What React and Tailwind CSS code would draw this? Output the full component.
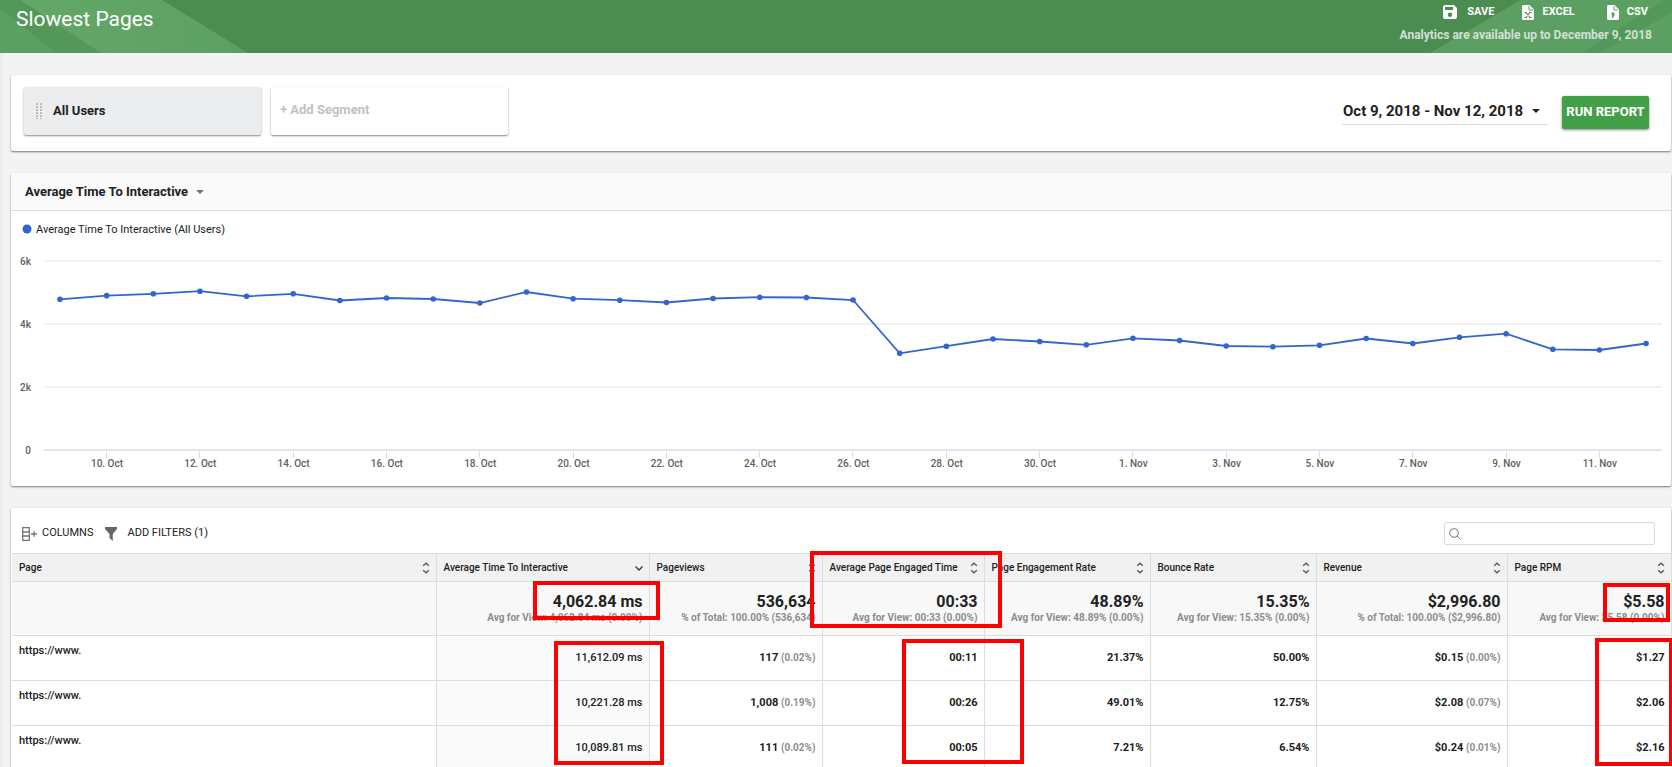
import React, { useState, useCallback } from 'react'
import clsx from 'clsx'

const times = [
  4785, 4900, 4960, 5042, 4880, 4960, 4747, 4826, 4794, 4667, 5017, 4804, 4756, 4683, 4810, 4851,
  4842, 4762, 3070, 3295, 3524, 3445, 3340, 3546, 3477, 3302, 3280, 3324, 3540, 3381, 3578, 3692,
  3197, 3175, 3381,
]

const days = [
  '10. Oct',
  '12. Oct',
  '14. Oct',
  '16. Oct',
  '18. Oct',
  '20. Oct',
  '22. Oct',
  '24. Oct',
  '26. Oct',
  '28. Oct',
  '30. Oct',
  '1. Nov',
  '3. Nov',
  '5. Nov',
  '7. Nov',
  '9. Nov',
  '11. Nov',
]

const columns = [
  { name: 'Page', width: 'w-[424px]' },
  {
    name: 'Average Time To Interactive',
    width: 'w-[213px]',
    sorted: true,
    total: '4,062.84 ms',
    note: 'Avg for View: 4,062.84 ms (0.00%)',
  },
  {
    name: 'Pageviews',
    width: 'w-[173px]',
    total: '536,634',
    note: '% of Total: 100.00% (536,634)',
  },
  {
    name: 'Average Page Engaged Time',
    width: 'w-[162px]',
    total: '00:33',
    note: 'Avg for View: 00:33 (0.00%)',
  },
  {
    name: 'Page Engagement Rate',
    width: 'w-[166px]',
    total: '48.89%',
    note: 'Avg for View: 48.89% (0.00%)',
  },
  {
    name: 'Bounce Rate',
    width: 'w-[166px]',
    total: '15.35%',
    note: 'Avg for View: 15.35% (0.00%)',
  },
  {
    name: 'Revenue',
    width: 'w-[191px]',
    total: '$2,996.80',
    note: '% of Total: 100.00% ($2,996.80)',
  },
  {
    name: 'Page RPM',
    width: 'w-[164px]',
    total: '$5.58',
    note: 'Avg for View: $5.58 (0.00%)',
  },
]

const rows = [
  [['11,612.09 ms'], ['117', '(0.02%)'], ['00:11'], ['21.37%'], ['50.00%'], ['$0.15', '(0.00%)'], ['$1.27']],
  [['10,221.28 ms'], ['1,008', '(0.19%)'], ['00:26'], ['49.01%'], ['12.75%'], ['$2.08', '(0.07%)'], ['$2.06']],
  [['10,089.81 ms'], ['111', '(0.02%)'], ['00:05'], ['7.21%'], ['6.54%'], ['$0.24', '(0.01%)'], ['$2.16']],
]

function SaveIcon() {
  return (
    <svg className="h-[14px] w-[14px]" viewBox="0 0 14 14" fill="currentColor">
      <path
        fillRule="evenodd"
        d="M2 0h9l3 3v9a2 2 0 0 1-2 2H2a2 2 0 0 1-2-2V2a2 2 0 0 1 2-2zM2 2v3h8V2zM7 7.500a2.200 2.200 0 1 0 0 4.400 2.200 2.200 0 0 0 0-4.400z"
      />
    </svg>
  )
}

function ExcelIcon() {
  return (
    <svg className="h-[15px] w-3" viewBox="0 0 12 15">
      <path fill="currentColor" d="M1.500 0H7.500L12 4.500v9a1.500 1.500 0 0 1-1.500 1.500h-9A1.500 1.500 0 0 1 0 13.500v-12A1.500 1.500 0 0 1 1.500 0z" />
      <path d="M7 1v4h4" fill="none" stroke="#5c9f62" />
      <path
        d="M2.500 7.500h2.500M7 7.500h2.500M2.500 12.500h2.500M7 12.500h2.500M4 7.500l4 5M8 7.500l-4 5"
        fill="none"
        stroke="#4f9255"
        strokeWidth="1.200"
      />
    </svg>
  )
}

function CsvIcon() {
  return (
    <svg className="h-[15px] w-3" viewBox="0 0 12 15">
      <path fill="currentColor" d="M1.500 0H7.500L12 4.500v9a1.500 1.500 0 0 1-1.500 1.500h-9A1.500 1.500 0 0 1 0 13.500v-12A1.500 1.500 0 0 1 1.500 0z" />
      <path d="M7 1v4h4" fill="none" stroke="#5c9f62" />
      <path d="M4.500 7.500h3V10.500L6 13H4.500L5.500 10.500h-1z" fill="#5c9f62" />
    </svg>
  )
}

function Caret({ className }) {
  return (
    <svg className={clsx('h-1 w-2', className)} viewBox="0 0 8 4" fill="currentColor">
      <path d="M0 0h8L4 4z" />
    </svg>
  )
}

function SortIcon({ sorted }) {
  return (
    <svg className="h-3 w-2 shrink-0" viewBox="0 0 8 12" fill="none" stroke="#555" strokeWidth="1.300">
      {sorted ? <path stroke="#333" d="M.5 4.500 4 8l3.500-3.500" /> : <path d="M1.200 3.700 4 1.200l2.800 2.500M1.200 8.300 4 10.800l2.800-2.500" />}
    </svg>
  )
}

function Card({ children, className }) {
  return (
    <section className={clsx('rounded-xs bg-white shadow-[0_1px_2px_#777]', className)}>
      {children}
    </section>
  )
}

function Header() {
  return (
    <header className="relative flex h-[53px] justify-between bg-[#4b8d50] pl-4 pr-5 text-white">
      <svg className="absolute left-0 top-0 h-[53px] w-[250px]" viewBox="0 0 250 53">
        <defs>
          <linearGradient id="ray" x1="0" y1="0" x2="1" y2="0">
            <stop offset="0" stopColor="#64a869" />
            <stop offset="1" stopColor="#5c9f62" />
          </linearGradient>
        </defs>
        <path d="M0 0h20l81 53H0z" fill="#549859" />
        <path d="M0 8l56 45H0z" fill="#5c9f62" />
        <path d="M20 0h142l86 53H101z" fill="url(#ray)" />
      </svg>
      <svg className="absolute right-0 top-0 h-[53px] w-[242px]" viewBox="0 0 242 53">
        <path d="M91 0h144l-83 53H0z" fill="#5c9f62" />
        <path d="M235 0h7v53h-90z" fill="#549859" />
        <path d="M242 12v41h-72z" fill="#5c9f62" />
      </svg>
      <h1 className="relative pt-[5px] text-[21px] leading-7">Slowest Pages</h1>
      <div className="relative flex flex-col items-end pt-1">
        <div className="flex gap-7 pr-1 text-[11px] font-bold leading-4">
          <button className="flex items-center gap-[10px]">
            <SaveIcon />
            SAVE
          </button>
          <button className="flex items-center gap-2 pr-1">
            <ExcelIcon />
            EXCEL
          </button>
          <button className="flex items-center gap-2">
            <CsvIcon />
            CSV
          </button>
        </div>
        <p className="pt-[7px] text-xs font-bold leading-4 text-[#d3e0d4]">
          Analytics are available up to December 9, 2018
        </p>
      </div>
    </header>
  )
}

function Segments() {
  return (
    <Card className="flex h-[76px] items-start justify-between pl-[13px] pr-[22px] pt-3">
      <div className="flex gap-[10px] text-[13px] font-bold">
        <button className="flex h-12 w-[237px] items-center rounded-xs bg-[#ebedef] pl-3 shadow-[0_1px_2px_#888]">
          <svg className="mr-[11px] h-4 w-[6px]" viewBox="0 0 6 16" stroke="#bbb" strokeWidth="2" strokeDasharray="2 1">
            <path d="M1 0v16M5 0v16" />
          </svg>
          All Users
        </button>
        <button className="flex h-12 w-[237px] items-center rounded-xs bg-white pb-[2px] pl-[9px] text-[#bfc2c0] shadow-[0_1px_2px_#888]">
          + Add Segment
        </button>
      </div>
      <div className="flex items-center gap-[14px] pt-[9px]">
        <button className="flex h-[25px] w-[206px] items-center justify-between border-b border-[#ddd] pb-[2px] pl-px pr-2 text-[15px] font-bold">
          Oct 9, 2018 - Nov 12, 2018
          <Caret />
        </button>
        <button className="h-[33px] w-[87px] rounded-xs bg-[#439f47] pb-[2px] text-[13px] font-bold text-white shadow-[0_1px_3px_#888]">
          RUN REPORT
        </button>
      </div>
    </Card>
  )
}

function Chart() {
  const points = times.map((ms, i) => [49 + i * 46.65, 239 - ms / 31.75])

  return (
    <Card>
      <div className="flex h-[38px] items-center border-b border-[#ddd] bg-[#fafafa] pl-[14px]">
        <button className="flex items-center gap-2 text-[13px] font-bold">
          Average Time To Interactive
          <Caret className="text-[#757575]" />
        </button>
      </div>
      <svg className="block w-full" viewBox="0 0 1660 275">
        <circle cx="16" cy="18" r="4.500" fill="#3366cc" />
        <text x="25" y="22" fontSize="11" fill="#212121">
          Average Time To Interactive (All Users)
        </text>
        {['6k', '4k', '2k', '0'].map((label, i) => (
          <g key={label}>
            <path d={`M33 ${50 + i * 63}h1618`} stroke={label === '0' ? '#e0e5ec' : '#f2f2f2'} strokeWidth="2" />
            <text x="20" y={54 + i * 63} fontSize="10" fontWeight="500" fill="#606060" textAnchor="end">
              {label}
            </text>
          </g>
        ))}
        {days.map((day, i) => (
          <g key={day}>
            <path d={`M${95 + Math.round(i * 93.3)}.500 240v7`} stroke="#dbe0e8" />
            <text x={96 + i * 93.3} y="256" fontSize="10" fontWeight="500" fill="#606060" textAnchor="middle">
              {day}
            </text>
          </g>
        ))}
        <polyline points={points.join(' ')} fill="none" stroke="#3366cc" strokeWidth="1.800" />
        {points.map(([x, y]) => (
          <circle key={x} cx={x} cy={y} r="2.800" fill="#3366cc" />
        ))}
      </svg>
    </Card>
  )
}

function Toolbar() {
  const [search, setSearch] = useState('')
  const changeSearch = useCallback((event) => setSearch(event.currentTarget.value), [setSearch])

  return (
    <div className="flex h-[45px] items-center justify-between pl-[11px] pr-4 pt-[6px]">
      <div className="flex gap-3 text-[11px]">
        <button className="flex items-center gap-[5px]">
          <svg className="h-[14px] w-[15px]" viewBox="0 0 15 14" fill="none" stroke="#757575" strokeWidth="1.300">
            <path d="M.7.700h6.600v12.600H.7zM.7 5h6.600M.7 9h6.600M9 7h6M12 4.200v5.600" />
          </svg>
          COLUMNS
        </button>
        <button className="flex items-center gap-[10px]">
          <svg className="h-[14px] w-3" viewBox="0 0 12 14" fill="#666">
            <path d="M0 0h12v2L7.800 7v7L4.500 11V7L0 2z" />
          </svg>
          ADD FILTERS (1)
        </button>
      </div>
      <label className="flex h-[23px] w-[211px] items-center rounded-xs border border-[#dcdcdc] px-1">
        <svg className="h-3 w-3 shrink-0" viewBox="0 0 12 12" fill="none" stroke="#757575">
          <circle cx="5" cy="5" r="4.300" />
          <path d="M8 8l3.500 3.500" />
        </svg>
        <input
          aria-label="Search"
          className="min-w-0 grow pl-2 text-xs outline-none"
          value={search}
          onChange={changeSearch}
        />
      </label>
    </div>
  )
}

function PagesTable() {
  return (
    <table className="ml-px w-[calc(100%-1px)] table-fixed border-collapse">
      <thead>
        <tr className="h-7 border-y border-[#ddd] bg-[#f1f1f1]">
          {columns.map((column) => (
            <th
              key={column.name}
              className={clsx('border-r border-[#ddd] pl-[7px] pr-[6px] text-left text-[10px] font-medium', column.width)}>
              <button className="flex w-full items-center justify-between whitespace-nowrap">
                {column.name}
                <SortIcon sorted={column.sorted} />
              </button>
            </th>
          ))}
        </tr>
      </thead>
      <tbody>
        <tr className="h-[54px] border-b border-[#ddd] bg-[#f8f8f8] text-right font-bold">
          {columns.map((column) => (
            <td key={column.name} className="whitespace-nowrap border-r border-[#ddd] pr-[6px]">
              <p className="text-base leading-[18px]">{column.total}</p>
              <p className="text-[10px] leading-[14px] text-[#8d8d8d]">{column.note}</p>
            </td>
          ))}
        </tr>
        {rows.map((row) => (
          <tr key={row[0][0]} className="h-[45px] border-b border-[#ddd] text-right text-[11px] font-medium">
            <td className="border-r border-[#ddd] pl-[7px] pt-[7px] text-left align-top leading-4">
              https://www.
            </td>
            {row.map(([value, share], i) => (
              <td
                key={columns[i + 1].name}
                className={clsx('border-r border-[#ddd] pr-[6px]', i === 0 ? 'bg-[#fafafa]' : 'font-bold')}>
                {value} {share && <span className="text-[10px] text-[#8d8d8d]">{share}</span>}
              </td>
            ))}
          </tr>
        ))}
      </tbody>
    </table>
  )
}

// red frames drawn over the slow cells
function Highlights() {
  return (
    <div className="pointer-events-none">
      <div className="absolute left-[522px] top-[73px] h-[39px] w-[127px] border-4 border-[#f00]" />
      <div className="absolute left-[543px] top-[133px] h-[124px] w-[110px] border-4 border-[#f00]" />
      <div className="absolute left-[799px] top-[43px] h-[77px] w-[192px] border-4 border-[#f00]" />
      <div className="absolute left-[891px] top-[131px] h-[125px] w-[122px] border-4 border-[#f00]" />
      <div className="absolute right-[1px] top-[75px] h-[39px] w-[67px] border-4 border-[#f00]" />
      <div className="absolute -right-[2px] top-[130px] h-[128px] w-[78px] border-4 border-[#f00]" />
    </div>
  )
}

function App() {
  return (
    <div className="h-screen overflow-hidden bg-[#f3f3f3] font-[Roboto,sans-serif] text-[#212121]">
      <Header />
      <main className="flex flex-col gap-[22px] border-l-[3px] border-[#eee] pl-2 pr-px pt-[22px]">
        <Segments />
        <Chart />
        <Card className="relative">
          <Toolbar />
          <PagesTable />
          <Highlights />
        </Card>
      </main>
    </div>
  )
}

export default App
